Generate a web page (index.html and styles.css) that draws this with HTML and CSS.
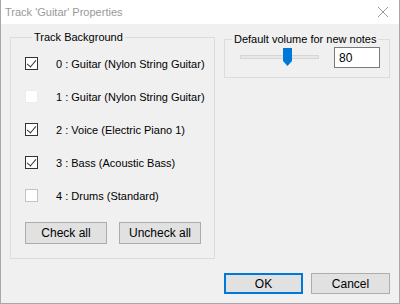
FILE: index.html
```html
<!DOCTYPE html>
<html lang="en">
<head>
    <meta charset="UTF-8">
    <title>Track 'Guitar' Properties</title>
    <link rel="stylesheet" href="styles.css">
</head>
<body>
    <div class="window">
        <div class="titlebar">
            <span class="title">Track 'Guitar' Properties</span>
            <svg class="close" width="12" height="12" viewBox="0 0 12 12">
                <path d="M1 1L11 11M11 1L1 11" stroke="#9a9a9a" stroke-width="1" fill="none"/>
            </svg>
        </div>
        <div class="content">
            <div class="groups">
                <fieldset class="group tracks">
                    <legend>Track Background</legend>
                    <div class="track-list">
                        <label class="track"><span class="box checked"></span>0 : Guitar (Nylon String Guitar)</label>
                        <label class="track"><span class="box faint"></span>1 : Guitar (Nylon String Guitar)</label>
                        <label class="track"><span class="box checked"></span>2 : Voice (Electric Piano 1)</label>
                        <label class="track"><span class="box checked"></span>3 : Bass (Acoustic Bass)</label>
                        <label class="track"><span class="box light"></span>4 : Drums (Standard)</label>
                    </div>
                    <div class="group-buttons">
                        <button class="btn">Check all</button>
                        <button class="btn">Uncheck all</button>
                    </div>
                </fieldset>
                <fieldset class="group volume">
                    <legend>Default volume for new notes</legend>
                    <div class="volume-row">
                        <div class="slider">
                            <div class="track-line"></div>
                            <svg class="thumb" width="9" height="18" viewBox="0 0 9 18">
                                <path d="M0 0H9V13L4.5 18L0 13Z" fill="#0078d7"/>
                            </svg>
                        </div>
                        <div class="num">80</div>
                    </div>
                </fieldset>
            </div>
            <div class="footer">
                <button class="btn default">OK</button>
                <button class="btn">Cancel</button>
            </div>
        </div>
    </div>
</body>
</html>
```

FILE: styles.css
```css
*{
    margin: 0;
    padding: 0;
    box-sizing: border-box;
}
body{
    width: 400px;
    height: 304px;
    font-family: "Liberation Sans", Arial, sans-serif;
    font-size: 11px;
    color: #000;
    background: #fff;
    white-space: nowrap;
}
.window{
    width: 400px;
    height: 304px;
    border: 1px solid #a8a8a8;
    border-top: none;
    display: flex;
    flex-direction: column;
    background: #f0f0f0;
}
.titlebar{
    height: 24px;
    background: #fff;
    display: flex;
    align-items: center;
    justify-content: space-between;
    padding: 0 10px 0 4px;
}
.title{
    color: #999;
}
.content{
    flex: 1;
    display: flex;
    flex-direction: column;
    padding: 5px 9px 9px 9px;
}
.groups{
    display: flex;
    align-items: flex-start;
    gap: 9px;
}
.group{
    border: 1px solid #dcdcdc;
    padding: 0;
    min-width: 0;
}
.group legend{
    margin-left: 7px;
    padding: 0 2px;
    line-height: 16px;
}
.tracks{
    width: 205px;
    flex: none;
    height: 230px;
    padding: 0 0 0 14px;
}
.track-list{
    display: flex;
    flex-direction: column;
    padding-top: 2px;
}
.track{
    height: 33px;
    display: flex;
    align-items: center;
}
.box{
    width: 13px;
    height: 13px;
    border: 1px solid #333;
    background: #fff;
    margin-right: 18px;
    position: relative;
}
.box.faint{
    border-color: #ececec;
}
.box.light{
    border-color: #c4c4c4;
}
.box.checked::after{
    content: "";
    position: absolute;
    left: 3px;
    top: 0px;
    width: 4px;
    height: 8px;
    border: solid #333;
    border-width: 0 1px 1px 0;
    transform: rotate(40deg);
}
.group-buttons{
    display: flex;
    gap: 12px;
    margin-top: 10px;
}
.btn{
    font: inherit;
    font-size: 12px;
    height: 22px;
    width: 82px;
    background: #e1e1e1;
    border: 1px solid #adadad;
}
.volume{
    flex: 1;
    height: 47px;
    margin-top: 2px;
}
.volume-row{
    display: flex;
    align-items: center;
    padding: 0 9px 0 15px;
}
.slider{
    position: relative;
    width: 79px;
    height: 20px;
}
.track-line{
    position: absolute;
    left: 0;
    right: 0;
    top: 7px;
    height: 4px;
    background: #e7e7e7;
    border: 1px solid #d6d6d6;
}
.thumb{
    position: absolute;
    left: 43px;
    top: 0;
}
.num{
    margin-left: auto;
    width: 46px;
    height: 21px;
    border: 1px solid #7a7a7a;
    background: #fff;
    padding: 3px 4px;
    font-size: 12px;
}
.footer{
    margin-top: auto;
    display: flex;
    justify-content: flex-end;
    gap: 8px;
}
.footer .btn{
    width: 79px;
    height: 21px;
}
.btn.default{
    border: 2px solid #0078d7;
}
```
